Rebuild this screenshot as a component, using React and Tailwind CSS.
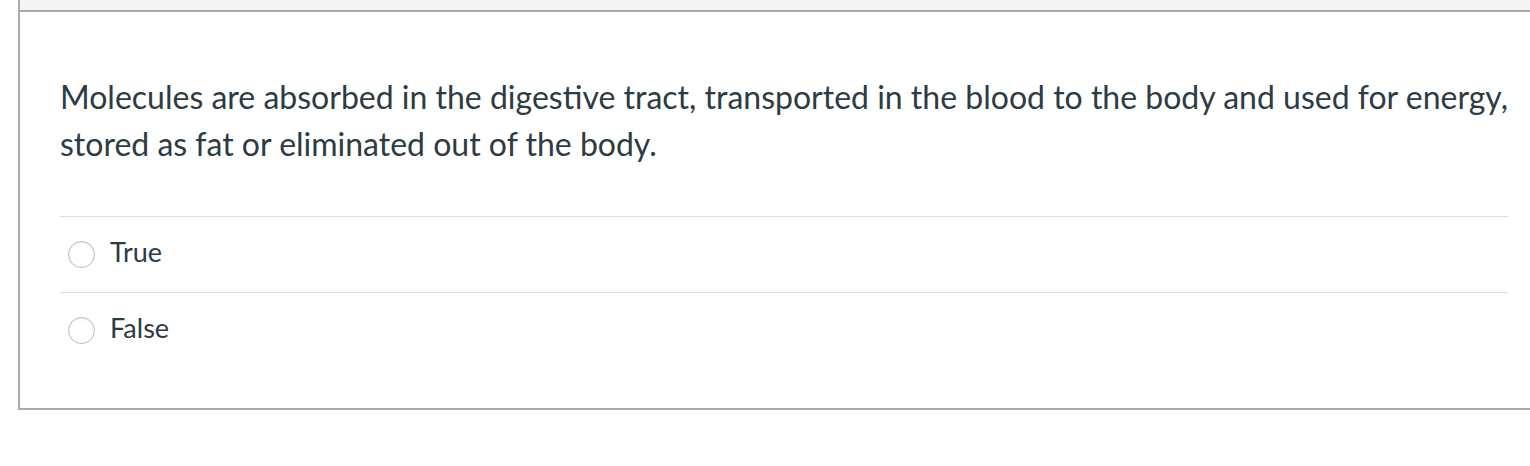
import React from 'react'

const answers = ['True', 'False']

export default function App() {
  return (
    <div className="min-h-[466px] bg-white pl-[18px]" style={{ fontFamily: 'Lato, "Noto Sans", sans-serif' }}>
      <div className="border-2 border-r-0 border-t-0 border-[#aaaaaa] text-[#2d3b45]">
        <div className="h-[12px] border-b-2 border-[#aaaaaa] bg-[#f5f5f5]" />
        <div className="px-[40px] pb-[40px] pt-[61px]">
          <p className="mr-[-22px] text-[32px] leading-[47px]">
            Molecules are absorbed in the digestive tract, transported in the blood to the body and used for energy,
            stored as fat or eliminated out of the body.
          </p>
          <div className="mt-[49px] mr-[-18px]">
            {answers.map((a) => (
              <label key={a} className="flex h-[76px] items-center border-t border-[#dddddd] pl-[8px]">
                <span className="h-[27px] w-[27px] rounded-full border border-[#b9b9b9] bg-white shadow-[inset_0_1px_2px_rgba(0,0,0,0.08)]" />
                <span className="mb-[4px] ml-[15px] text-[27px]">{a}</span>
              </label>
            ))}
          </div>
        </div>
      </div>
    </div>
  )
}
